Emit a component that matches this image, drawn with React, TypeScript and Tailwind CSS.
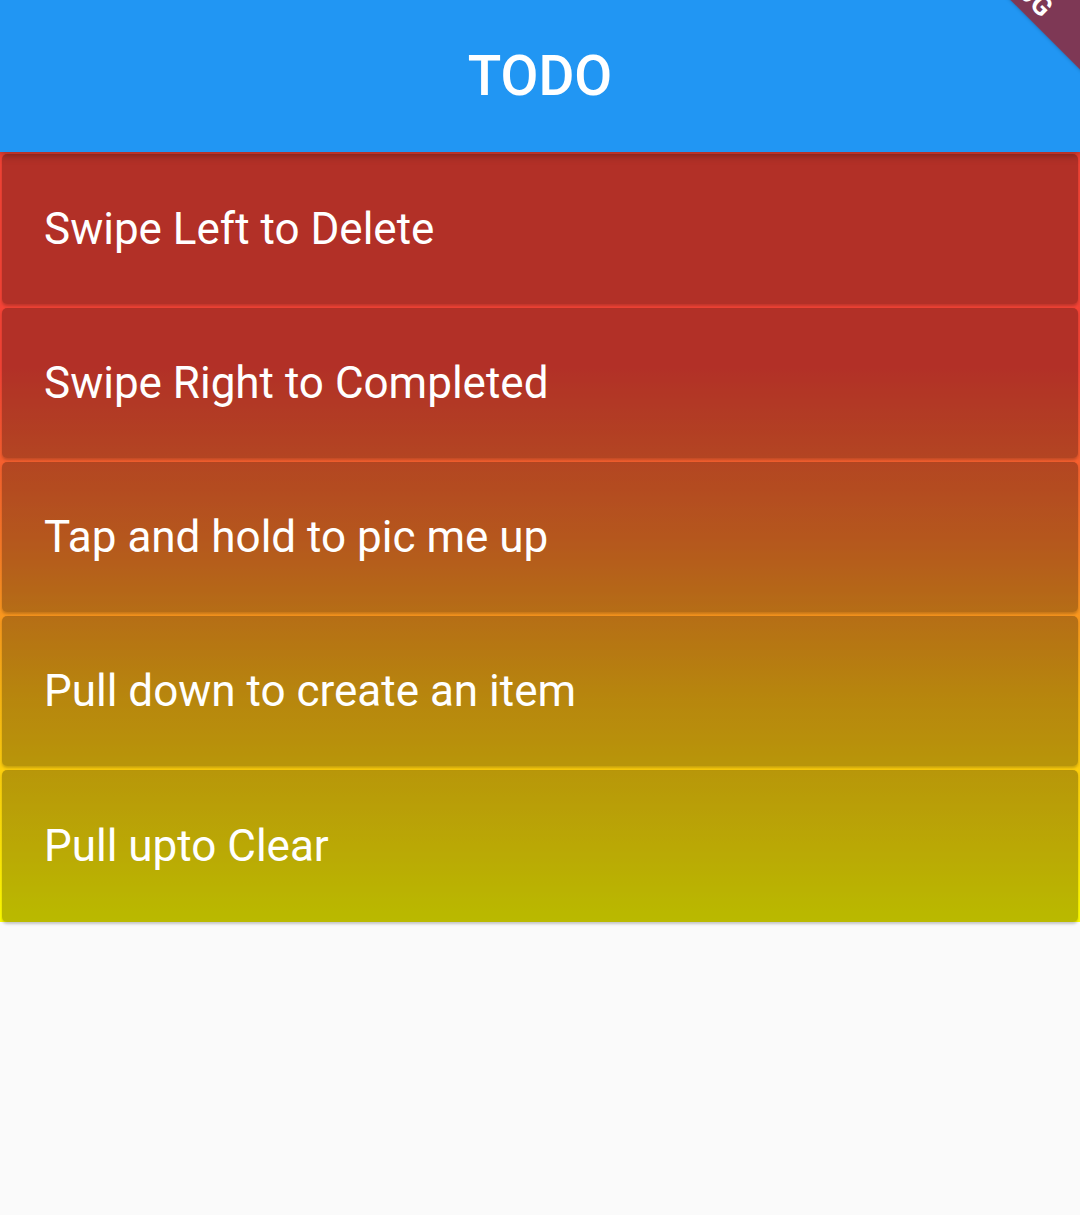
const ITEMS = [
  'Swipe Left to Delete',
  'Swipe Right to Completed',
  'Tap and hold to pic me up',
  'Pull down to create an item',
  'Pull upto Clear',
]

function DebugBanner() {
  return (
    <div className="pointer-events-none absolute left-[874px] top-[-54px] h-[56px] w-[300px] rotate-45 bg-[rgba(176,6,0,0.65)] shadow-[0_0_4px_rgba(0,0,0,0.25)]">
      <div className="pt-[23px] text-center text-[27px] font-bold leading-[31px] tracking-[0.5px] text-white">DEBUG</div>
    </div>
  )
}

export default function App() {
  return (
    <div className="flex min-h-[1215px] w-[1080px] flex-col bg-[#fafafa] font-['Roboto',sans-serif]">
      <header className="relative z-10 flex h-[152px] shrink-0 items-center justify-center overflow-hidden bg-[#2196f3] shadow-[0_3px_8px_rgba(0,0,0,0.35)]">
        <h1 className="text-[55px] font-medium leading-none text-white">TODO</h1>
        <DebugBanner />
      </header>

      {/* list sits on a red -> yellow wash, cards darken it */}
      <div className="flex flex-col bg-[linear-gradient(to_bottom,#f44336_0%,#f44336_28%,#f87729_50%,#fbb614_70%,#ffe608_90%,#ffff00_100%)]">
        {ITEMS.map((label) => (
          <div
            key={label}
            className="mx-[2px] mt-[4px] flex h-[150px] items-center rounded-[5px] bg-[rgba(0,0,0,0.27)] pl-[42px] shadow-[0_2px_3px_rgba(0,0,0,0.22)] first:mt-[2px] last:h-[152px]"
          >
            <span className="text-[44px] leading-none text-white">{label}</span>
          </div>
        ))}
      </div>
      <div className="flex-1" />
    </div>
  )
}
